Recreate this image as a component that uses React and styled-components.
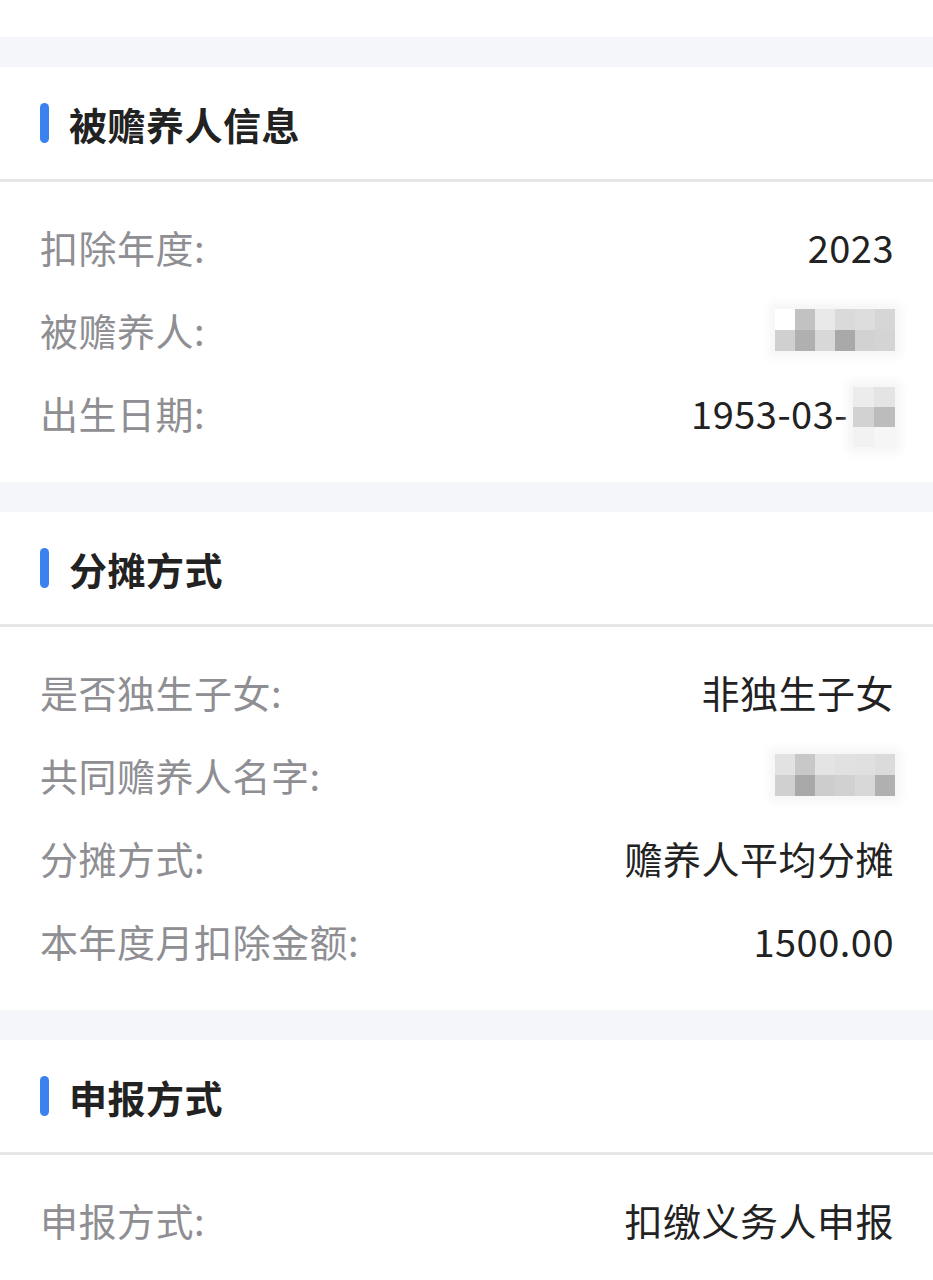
import React from "react";
import styled, { createGlobalStyle } from "styled-components";

const GlobalStyle = createGlobalStyle`
  body {
    margin: 0;
    background: #fff;
    font-family: "Noto Sans CJK SC", "Noto Sans", sans-serif;
  }
`;

const Page = styled.div`
  width: 933px;
  background: #fff;
`;

const TopSpace = styled.div`
  height: 37px;
  background: #fff;
`;

const Gap = styled.div`
  height: 30px;
  background: #f5f6fa;
`;

const Header = styled.div`
  height: 112px;
  display: flex;
  align-items: center;
  gap: 20px;
  padding-left: 40px;
  border-bottom: 3px solid #e6e6e8;
`;

const Bar = styled.div`
  width: 9px;
  height: 40px;
  border-radius: 5px;
  background: #3b82f1;
`;

const Title = styled.div`
  font-size: 38px;
  font-weight: 700;
  color: #222;
  letter-spacing: 0.5px;
`;

const Body = styled.div`
  padding: 23px 39px 28px 40px;
`;

const Row = styled.div`
  height: 83px;
  display: flex;
  align-items: center;
  justify-content: space-between;
  font-size: 38px;
`;

const Label = styled.span`
  color: #8e8e93;
  letter-spacing: 0.5px;
`;

const Value = styled.span`
  display: flex;
  align-items: center;
  color: #222;
  letter-spacing: 0.5px;
`;

const Mosaic = styled.div`
  display: grid;
  grid-template-columns: repeat(${(p) => p.cols}, ${(p) => p.cell}px);
  grid-auto-rows: ${(p) => p.rowH}px;
  margin-right: -1px;
  filter: blur(0.4px);
  box-shadow: 0 0 8px 6px rgba(240, 240, 240, 0.6);
`;

const Cell = styled.div`
  background: ${(p) => p.c};
`;

const nameCells1 = [
  "#fff", "#c2c2c2", "#e9e9e9", "#dadada", "#dddddd", "#d6d6d6",
  "#d0d0d0", "#b0b0b0", "#d8d8d8", "#a9a9a9", "#d2d2d2", "#d4d4d4",
];

const nameCells2 = [
  "#e2e2e2", "#c8c8c8", "#e4e4e4", "#e1e1e1", "#e0e0e0", "#dbdbdb",
  "#d0d0d0", "#a8a8a8", "#cdcdcd", "#d1d1d1", "#d8d8d8", "#b0b0b0",
];

const dateCells = ["#ececec", "#e4e4e4", "#d2d2d2", "#bcbcbc", "#f2f2f2", "#f6f6f6"];

function Blur({ cells, cols, cell = 20, rowH = 21 }) {
  return (
    <Mosaic cols={cols} cell={cell} rowH={rowH}>
      {cells.map((c, i) => (
        <Cell key={i} c={c} />
      ))}
    </Mosaic>
  );
}

const DateBlur = styled.div`
  margin-left: 5px;
  margin-top: 8px;
`;

function Section({ title, rows }) {
  return (
    <>
      <Gap />
      <Header>
        <Bar />
        <Title>{title}</Title>
      </Header>
      <Body>
        {rows.map((r, i) => (
          <Row key={i}>
            <Label>{r[0]}</Label>
            <Value>{r[1]}</Value>
          </Row>
        ))}
      </Body>
    </>
  );
}

export default function App() {
  return (
    <Page>
      <GlobalStyle />
      <TopSpace />
      <Section
        title="被赡养人信息"
        rows={[
          ["扣除年度:", "2023"],
          ["被赡养人:", <Blur cells={nameCells1} cols={6} />],
          [
            "出生日期:",
            <>
              1953-03-
              <DateBlur>
                <Blur cells={dateCells} cols={2} cell={21} rowH={20} />
              </DateBlur>
            </>,
          ],
        ]}
      />
      <Section
        title="分摊方式"
        rows={[
          ["是否独生子女:", "非独生子女"],
          ["共同赡养人名字:", <Blur cells={nameCells2} cols={6} />],
          ["分摊方式:", "赡养人平均分摊"],
          ["本年度月扣除金额:", "1500.00"],
        ]}
      />
      <Section title="申报方式" rows={[["申报方式:", "扣缴义务人申报"]]} />
    </Page>
  );
}
